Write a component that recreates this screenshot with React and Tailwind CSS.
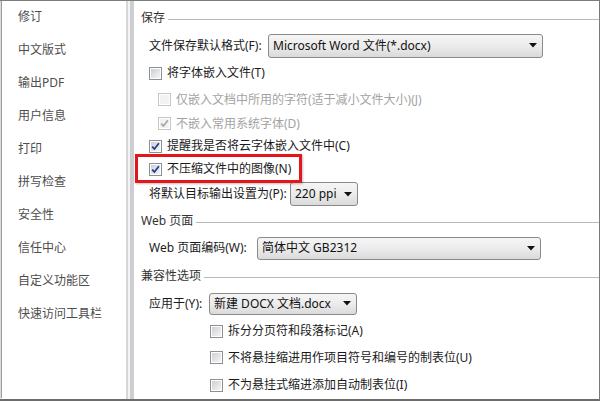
import React from 'react';

const font = { fontFamily: '"Noto Sans", "Noto Sans CJK SC", sans-serif' };

const navItems = ['修订', '中文版式', '输出PDF', '用户信息', '打印', '拼写检查', '安全性', '信任中心', '自定义功能区', '快速访问工具栏'];

function CheckBox({ checked, disabled }) {
  return (
    <span
      className={
        disabled
          ? 'flex h-[13px] w-[13px] shrink-0 items-center justify-center border border-[#c6c6c6] bg-white'
          : 'flex h-[13px] w-[13px] shrink-0 items-center justify-center border border-[#8e8f8f] bg-white'
      }
    >
      <span
        className={
          disabled
            ? 'flex h-[9px] w-[9px] items-center justify-center bg-[#f2f2f2]'
            : 'flex h-[9px] w-[9px] items-center justify-center bg-gradient-to-br from-[#cdd0d6] to-[#f4f5f7]'
        }
      >
        {checked && (
          <svg width="9" height="9" viewBox="0 0 9 9">
            <path
              d="M1.2 4.6 L3.4 7 L7.9 1.3"
              fill="none"
              stroke={disabled ? '#a5a5a5' : '#22368c'}
              strokeWidth="1.7"
            />
          </svg>
        )}
      </span>
    </span>
  );
}

function Select({ value, className }) {
  return (
    <div
      className={
        'flex items-center rounded-[3px] border border-[#8a8a8a] bg-gradient-to-b from-[#f5f5f5] via-[#ececec] to-[#dadada] pl-[4px] pr-[5px] text-[#111] ' +
        className
      }
    >
      <span className="whitespace-nowrap">{value}</span>
      <svg className="ml-auto" width="8" height="5" viewBox="0 0 8 5">
        <path d="M0 0 H8 L4 4.5 Z" fill="#111" />
      </svg>
    </div>
  );
}

function GroupHeader({ title, className }) {
  return (
    <div className={'flex items-center pl-[7px] text-[#333] ' + className}>
      <span className="whitespace-nowrap">{title}</span>
      <span className="ml-[3px] mt-[3px] h-px flex-1 bg-[#b9b9b9]"></span>
    </div>
  );
}

function Option({ label, checked, disabled, indent, className }) {
  return (
    <div className={'flex items-center ' + indent + ' ' + className}>
      <CheckBox checked={checked} disabled={disabled} />
      <span className={disabled ? 'ml-[5px] whitespace-nowrap text-[#a3a3a3]' : 'ml-[5px] whitespace-nowrap text-[#1a1a1a]'}>
        {label}
      </span>
    </div>
  );
}

export default function App() {
  return (
    <div
      className="flex h-[401px] w-[600px] overflow-hidden border-t border-r border-b-2 border-t-[#7c7c7c] border-r-[#7a7a7a] border-b-[#6c6c6c] bg-white text-[12px] leading-none"
      style={font}
    >
      {/* left nav */}
      <div className="w-[126px] shrink-0 border-l border-l-[#dcdcdc]">
        <div className="h-full border-l border-l-[#9c9c9c] bg-white">
          <div className="-mt-[1px] flex flex-col">
            {navItems.map((item) => (
              <div key={item} className="flex h-[33px] items-center pl-[16px] text-[#4d4d4d]">
                {item}
              </div>
            ))}
          </div>
        </div>
      </div>

      {/* splitter */}
      <div className="w-[2px] shrink-0 bg-[#d7d7d7]"></div>
      <div className="w-[2px] shrink-0 bg-[#f3f3f3]"></div>
      <div className="w-[4px] shrink-0 bg-[#cdcdd2]"></div>

      {/* content */}
      <div className="flex min-w-0 flex-1 flex-col pt-[3px] text-[#1a1a1a]">
        <GroupHeader title="保存" className="h-[28px]" />

        <div className="flex h-[28px] items-center pl-[15px]">
          <span className="w-[119px] whitespace-nowrap">文件保存默认格式(F):</span>
          <Select value="Microsoft Word 文件(*.docx)" className="h-[24px] w-[275px]" />
        </div>

        <Option label="将字体嵌入文件(T)" indent="pl-[15px]" className="h-[28px]" />
        <Option label="仅嵌入文档中所用的字符(适于减小文件大小)(J)" disabled indent="pl-[24px]" className="h-[25px]" />
        <Option label="不嵌入常用系统字体(D)" disabled checked indent="pl-[24px]" className="h-[23px]" />
        <Option label="提醒我是否将云字体嵌入文件中(C)" checked indent="pl-[15px]" className="h-[23px]" />

        <div className="relative h-[23px]">
          <Option label="不压缩文件中的图像(N)" checked indent="pl-[15px]" className="h-[23px]" />
          <div className="absolute left-[1px] top-[-4px] h-[29px] w-[167px] border-[3px] border-[#e3161b] shadow-[1px_1px_2px_rgba(0,0,0,0.25)]"></div>
        </div>

        <div className="flex h-[27px] items-center pl-[15px]">
          <span className="w-[141px] whitespace-nowrap">将默认目标输出设置为(P):</span>
          <Select value="220 ppi" className="h-[24px] w-[68px]" />
        </div>

        <GroupHeader title="Web 页面" className="h-[27px]" />

        <div className="flex h-[28px] items-center pl-[15px]">
          <span className="w-[108px] whitespace-nowrap">Web 页面编码(W):</span>
          <Select value="简体中文 GB2312" className="h-[23px] w-[284px]" />
        </div>

        <GroupHeader title="兼容性选项" className="h-[28px]" />

        <div className="flex h-[28px] items-center pl-[15px]">
          <span className="w-[60px] whitespace-nowrap">应用于(Y):</span>
          <Select value="新建 DOCX 文档.docx" className="h-[22px] w-[148px]" />
        </div>

        <Option label="拆分分页符和段落标记(A)" indent="pl-[76px]" className="h-[27px]" />
        <Option label="不将悬挂缩进用作项目符号和编号的制表位(U)" indent="pl-[76px]" className="h-[27px]" />
        <Option label="不为悬挂式缩进添加自动制表位(I)" indent="pl-[76px]" className="h-[28px]" />
      </div>
    </div>
  );
}
